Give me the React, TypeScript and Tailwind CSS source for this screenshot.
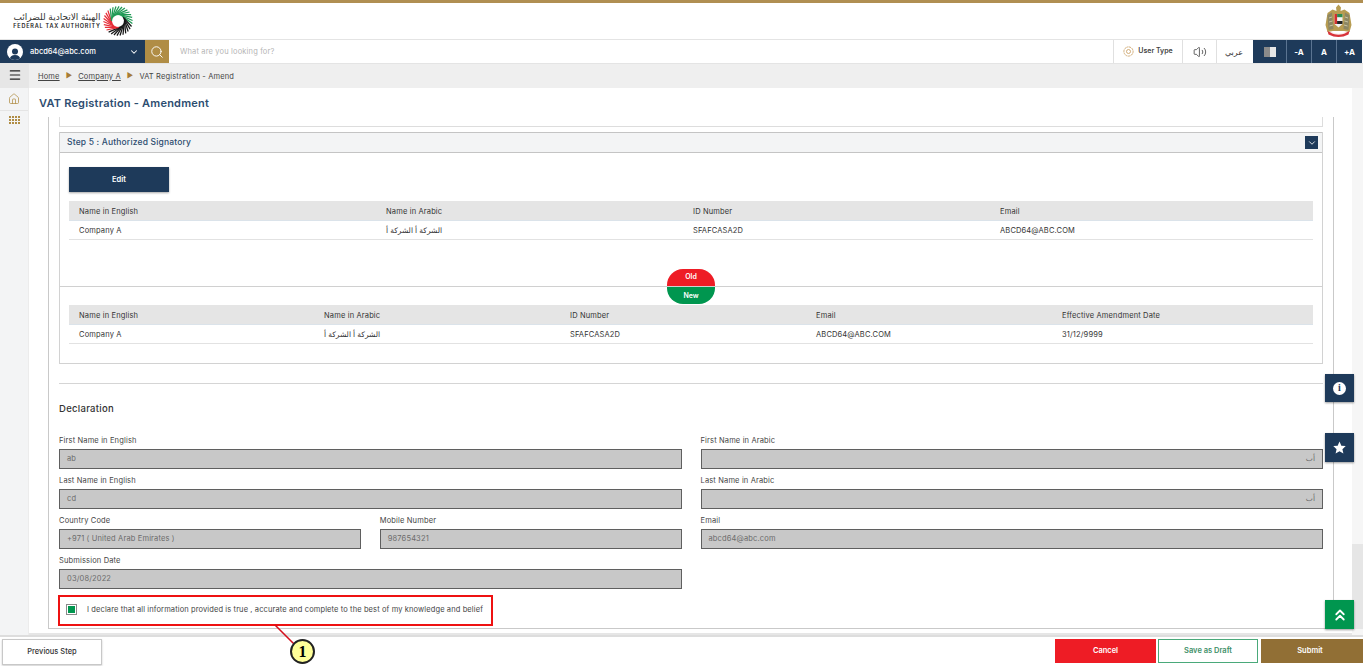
import { ChevronDown, ChevronsUp, Home, Menu, Search, Volume2 } from "lucide-react";

const firstTable = {
  head: ["Name in English", "Name in Arabic", "ID Number", "Email"],
  row: ["Company A", "الشركة أ الشركة أ", "SFAFCASA2D", "ABCD64@ABC.COM"],
};

const secondTable = {
  head: ["Name in English", "Name in Arabic", "ID Number", "Email", "Effective Amendment Date"],
  row: ["Company A", "الشركة أ الشركة أ", "SFAFCASA2D", "ABCD64@ABC.COM", "31/12/9999"],
};

function swirlColor(angle: number) {
  if (angle >= 170 && angle < 320) return "#1f9a55";
  if (angle >= 320 || angle < 75) return "#161616";
  return "#e62e38";
}

function FtaRing() {
  const strokes = Array.from({ length: 30 }, (_, i) => i * 12);
  return (
    <svg width="30" height="30" viewBox="-15 -15 30 30">
      {strokes.map((angle) => {
        const a = (angle * Math.PI) / 180;
        const b = ((angle + 58) * Math.PI) / 180;
        return (
          <line
            key={angle}
            x1={6.4 * Math.cos(a)}
            y1={6.4 * Math.sin(a)}
            x2={14.6 * Math.cos(b)}
            y2={14.6 * Math.sin(b)}
            stroke={swirlColor(angle)}
            strokeWidth="1.25"
          />
        );
      })}
    </svg>
  );
}

function Emblem() {
  return (
    <svg width="27" height="34" viewBox="0 0 27 34">
      <path d="M13.5 0.5 L16 3.5 L15.5 7 L19.5 5.5 L24.5 9 L26.5 21 L24.5 28 L19 27 L8 27 L2.5 28 L0.5 21 L2.5 9 L7.5 5.5 L11.5 7 L11 3.5 Z" fill="#b79c52" />
      <path d="M2.5 11 L7 8.5 L8.5 25 L3.5 26 Z M24.5 11 L20 8.5 L18.5 25 L23.5 26 Z" fill="#8d8763" />
      <path d="M4 14 L7 13 M4 18 L7.5 17 M4.5 22 L8 21 M23 14 L20 13 M23 18 L19.5 17 M22.5 22 L19 21" stroke="#d9d3b4" strokeWidth="0.8" />
      <path d="M9.5 10 H17.5 V20 L13.5 23.5 L9.5 20 Z" fill="#f4f4f4" />
      <rect x="9.5" y="10" width="2.6" height="10" fill="#d22f2f" />
      <rect x="12.1" y="10" width="5.4" height="3.2" fill="#2d8a4e" />
      <rect x="12.1" y="17" width="5.4" height="3" fill="#222222" />
      <path d="M2.5 27 Q13.5 34 24.5 27 L23.5 30.5 Q13.5 35.5 3.5 30.5 Z" fill="#d8333a" />
      <path d="M6 28.5 Q13.5 32 21 28.5" fill="none" stroke="#f6d9d9" strokeWidth="0.7" />
    </svg>
  );
}

function Field({ label, value, rtl }: { label: string; value: string; rtl?: boolean }) {
  return (
    <div className="mb-[6px] flex flex-col">
      <label className="mb-[2px] h-[12px] text-[7.5px] leading-[11px] tracking-[0.02em] text-[#444444]">{label}</label>
      <div
        className={`flex h-[20px] items-center border border-[#5f5f5f] bg-[#c8c8c8] px-[7px] text-[7.5px] tracking-[0.02em] text-[#6b6b6b] ${rtl ? "justify-end" : ""}`}
      >
        {value}
      </div>
    </div>
  );
}

function DataTable({ data, cols }: { data: { head: string[]; row: string[] }; cols: string }) {
  return (
    <div className="mx-[9px] text-[7.5px] tracking-[0.02em] text-[#333333]">
      <div className={`grid h-[20px] items-center border-b border-[#dbe3ea] bg-[#e5e5e5] px-[10px] pt-[2px] ${cols}`}>
        {data.head.map((h) => (
          <span key={h}>{h}</span>
        ))}
      </div>
      <div className={`grid h-[19px] items-center border-b border-[#e2e2e2] px-[10px] pt-[1px] ${cols}`}>
        {data.row.map((c) => (
          <span key={c}>{c}</span>
        ))}
      </div>
    </div>
  );
}

export default function App() {
  return (
    <div className="relative flex h-[666px] w-full flex-col overflow-hidden bg-white font-['Inter','DejaVu_Sans',sans-serif] text-[#333333]">
      <div className="h-[3px] bg-[#b08f52]" />

      <header className="flex h-[36px] items-center justify-between pl-[12px] pr-[11px]">
        <div className="flex items-center gap-[1px]">
          <div className="flex w-[90px] flex-col items-center">
            <span className="whitespace-nowrap text-[9px] leading-[11px] text-[#333333]">الهيئة الاتحادية للضرائب</span>
            <span className="whitespace-nowrap text-[5.5px] font-semibold leading-[9px] tracking-[0.14em] text-[#222222]">
              FEDERAL TAX AUTHORITY
            </span>
          </div>
          <FtaRing />
        </div>
        <Emblem />
      </header>

      <nav className="flex h-[25px] border-y border-[#e4e4e4] pr-[1px] text-[7px]">
        <div className="flex w-[145px] items-center bg-[#1e3a5a] pl-[7px] pr-[6px] text-white">
          <span className="flex h-[16px] w-[16px] items-end justify-center overflow-hidden rounded-full bg-white">
            <svg width="12" height="13" viewBox="0 0 12 13" fill="#1e3a5a">
              <circle cx="6" cy="4.5" r="3" />
              <path d="M0.5 13 Q1 8 6 8 Q11 8 11.5 13 Z" />
            </svg>
          </span>
          <span className="ml-[7px] flex-1 text-[7.5px] font-medium">abcd64@abc.com</span>
          <ChevronDown size={10} strokeWidth={2.5} />
        </div>
        <div className="flex w-[24px] items-center justify-center bg-[#b08d45] text-white">
          <Search size={14} strokeWidth={1.6} />
        </div>
        <div className="flex flex-1 items-center pl-[11px] text-[7.5px] tracking-[0.02em] text-[#b5b5b5]">What are you looking for?</div>
        <div className="flex w-[70px] items-center justify-center gap-[4px] border-x border-[#e0e0e0] font-semibold text-[#444444]">
          <svg width="11" height="11" viewBox="0 0 11 11" fill="none" stroke="#c79a5b" strokeWidth="0.8">
            <circle cx="5.5" cy="5.5" r="4.6" strokeDasharray="2.2 0.5" />
            <circle cx="5.5" cy="5.5" r="2" />
          </svg>
          User Type
        </div>
        <div className="flex w-[34px] items-center justify-center border-r border-[#e0e0e0] text-[#222222]">
          <Volume2 size={14} strokeWidth={1.2} />
        </div>
        <div className="flex w-[36px] items-center justify-center pr-[2px] text-[8px] text-[#333333]">عربي</div>
        <div className="flex w-[34px] items-center justify-center border-r border-[#5b7491] bg-[#1e3a5a]">
          <span className="flex h-[10px] w-[12px]">
            <span className="w-1/2 bg-[#8a8a8a]" />
            <span className="w-1/2 bg-[#e6e6e6]" />
          </span>
        </div>
        {["-A", "A", "+A"].map((s) => (
          <div
            key={s}
            className="flex w-[25px] items-center justify-center border-r border-[#5b7491] bg-[#1e3a5a] text-[8px] font-bold text-white last:border-r-0"
          >
            {s}
          </div>
        ))}
      </nav>

      <div className="flex h-[24px] bg-[#efefef] text-[7.5px] tracking-[0.02em] text-[#444444]">
        <div className="flex w-[29px] items-center justify-center bg-[#e6e6e6] pb-[3px] text-[#222222]">
          <Menu size={14} strokeWidth={2} />
        </div>
        <div className="flex items-center pl-[9px] pt-[1px]">
          <span className="underline">Home</span>
          <span className="mx-[6px] text-[7px] text-[#a67c37]">▶</span>
          <span className="underline">Company A</span>
          <span className="mx-[6px] text-[7px] text-[#a67c37]">▶</span>
          <span>VAT Registration - Amend</span>
        </div>
      </div>

      <div className="flex min-h-0 flex-1">
        <aside className="flex w-[29px] shrink-0 flex-col items-center border-r border-[#ececec] bg-[#f3f4f5]">
          <div className="flex h-[23px] w-full items-center justify-center border-b border-[#e4e4e4] text-[#b08d45]">
            <Home size={12} strokeWidth={1.5} />
          </div>
          <div className="mt-[5px] grid grid-cols-4 gap-[1px]">
            {Array.from({ length: 12 }, (_, i) => (
              <span key={i} className="h-[2px] w-[2px] bg-[#b08d45]" />
            ))}
          </div>
        </aside>

        <main className="flex min-w-0 flex-1 flex-col">
          <h1 className="flex h-[29px] shrink-0 items-center pl-[10px] pt-[2px] text-[11px] font-semibold tracking-[0.02em] text-[#2d4d70]">
            VAT Registration - Amendment
          </h1>

          <div className="flex min-h-0 flex-1 flex-col border-b-2 border-[#e6e6e6] pb-[6px]">
            <div className="flex flex-1">
              <div className="ml-[19px] h-[512px] w-[1286px] border-x border-b border-[#c9c9c9] px-[10px]">
                <div className="h-[10px] border-x border-b border-[#dddddd]" />

                <section className="mt-[5px] h-[232px] border-x border-b border-[#d2d2d2]">
                  <div className="flex h-[21px] items-center justify-between border-y border-[#c4c4c4] bg-[#f3f4f5] pl-[7px] pr-[4px]">
                    <span className="text-[8.5px] font-medium tracking-[0.02em] text-[#2d4d70]">Step 5 : Authorized Signatory</span>
                    <span className="flex h-[13px] w-[13px] items-center justify-center bg-[#1e3a5a] text-white">
                      <ChevronDown size={10} strokeWidth={2} />
                    </span>
                  </div>

                  <button className="ml-[9px] mt-[14px] block h-[25px] w-[100px] bg-[#1e3a5a] text-[7.5px] font-semibold text-white shadow-[0_1px_2px_rgba(0,0,0,0.35)]">
                    Edit
                  </button>

                  <div className="mt-[9px]">
                    <DataTable data={firstTable} cols="grid-cols-[repeat(3,307px)_1fr]" />
                  </div>

                  <div className="relative flex h-[65px] items-center">
                    <div className="mt-[27px] h-px w-full bg-[#d0d0d0]" />
                    <div className="absolute left-[607px] top-[29px] flex w-[48px] flex-col text-[7px] font-semibold text-white">
                      <span className="flex h-[17px] items-center justify-center rounded-t-[16px] bg-[#ee1c25]">Old</span>
                      <span className="mt-px flex h-[17px] items-center justify-center rounded-b-[16px] bg-[#00964f] pt-[2px]">New</span>
                    </div>
                  </div>

                  <DataTable data={secondTable} cols="grid-cols-[245px_246px_246px_246px_1fr]" />
                </section>

                <div className="mt-[19px] h-px bg-[#d5d5d5]" />

                <h2 className="mt-[19px] text-[9.5px] font-medium leading-[12px] tracking-[0.03em] text-[#333333]">Declaration</h2>

                <div className="mt-[20px] grid grid-cols-2 gap-x-[19px]">
                  <Field label="First Name in English" value="ab" />
                  <Field label="First Name in Arabic" value="أب" rtl />
                  <Field label="Last Name in English" value="cd" />
                  <Field label="Last Name in Arabic" value="أب" rtl />
                  <div className="grid grid-cols-2 gap-x-[19px]">
                    <Field label="Country Code" value="+971 ( United Arab Emirates )" />
                    <Field label="Mobile Number" value="987654321" />
                  </div>
                  <Field label="Email" value="abcd64@abc.com" />
                  <Field label="Submission Date" value="03/08/2022" />
                </div>

                <div className="mt-[9px] flex items-center pl-[7px]">
                  <span className="flex h-[11px] w-[11px] items-center justify-center border border-[#8a8a8a] bg-white">
                    <span className="h-[7px] w-[7px] bg-[#00964f]" />
                  </span>
                  <span className="ml-[10px] text-[7.5px] tracking-[0.015em] text-[#444444]">
                    I declare that all information provided is true , accurate and complete to the best of my knowledge and belief
                  </span>
                </div>
              </div>
            </div>
          </div>
        </main>

        <div className="flex w-[11px] shrink-0 flex-col justify-end bg-[#f6f6f6] pb-[6px]">
          <div className="h-[85px] bg-[#e6e6e6]" />
        </div>
      </div>

      <footer className="flex h-[31px] shrink-0 items-start border-t-2 border-[#dddddd] pl-[2px] pt-[2px] text-[7.5px] font-medium">
        <button className="h-[26px] w-[100px] border border-[#c8c8c8] bg-white text-[#333333] shadow-[0_1px_2px_rgba(0,0,0,0.2)]">
          Previous Step
        </button>
        <div className="ml-auto flex gap-[2px] font-semibold">
          <button className="h-[24px] w-[101px] bg-[#ee1c25] text-white">Cancel</button>
          <button className="h-[24px] w-[100px] border border-[#4aa97a] bg-white text-[#3d8f68]">Save as Draft</button>
          <button className="ml-[1px] h-[24px] w-[102px] bg-[#916f35] pr-[4px] text-white">Submit</button>
        </div>
      </footer>

      <div className="absolute left-[1325px] top-[374px] flex h-[28px] w-[29px] items-center justify-center bg-[#1e3a5a] shadow-[0_1px_2px_rgba(0,0,0,0.4)]">
        <span className="flex h-[13px] w-[13px] items-center justify-center rounded-full bg-white font-['Liberation_Serif',serif] text-[10px] font-bold leading-none text-[#1e3a5a]">
          i
        </span>
      </div>
      <div className="absolute left-[1325px] top-[433px] flex h-[29px] w-[29px] items-center justify-center bg-[#1e3a5a] shadow-[0_1px_2px_rgba(0,0,0,0.4)]">
        <svg width="13" height="13" viewBox="0 0 24 24" fill="#ffffff">
          <polygon points="12,1 15.4,8.6 23.5,9.4 17.4,15 19.2,23 12,18.8 4.8,23 6.6,15 0.5,9.4 8.6,8.6" />
        </svg>
      </div>
      <div className="absolute left-[1325px] top-[600px] flex h-[29px] w-[29px] items-center justify-center bg-[#00964f] text-white shadow-[0_1px_2px_rgba(0,0,0,0.4)]">
        <ChevronsUp size={18} strokeWidth={2.4} />
      </div>

      <div className="absolute left-[58px] top-[595px] h-[31px] w-[435px] border-2 border-[#ee1111]" />
      <svg className="absolute left-[270px] top-[622px]" width="30" height="28" viewBox="0 0 30 28">
        <line x1="5" y1="3" x2="26" y2="24" stroke="#d40f1b" strokeWidth="1.6" />
      </svg>
      <div className="absolute left-[290px] top-[639px] flex h-[25px] w-[25px] items-center justify-center rounded-full border-2 border-[#222222] bg-[#ffff99] font-['Liberation_Serif',serif] text-[16px] font-bold leading-none text-black">
        1
      </div>
    </div>
  );
}
